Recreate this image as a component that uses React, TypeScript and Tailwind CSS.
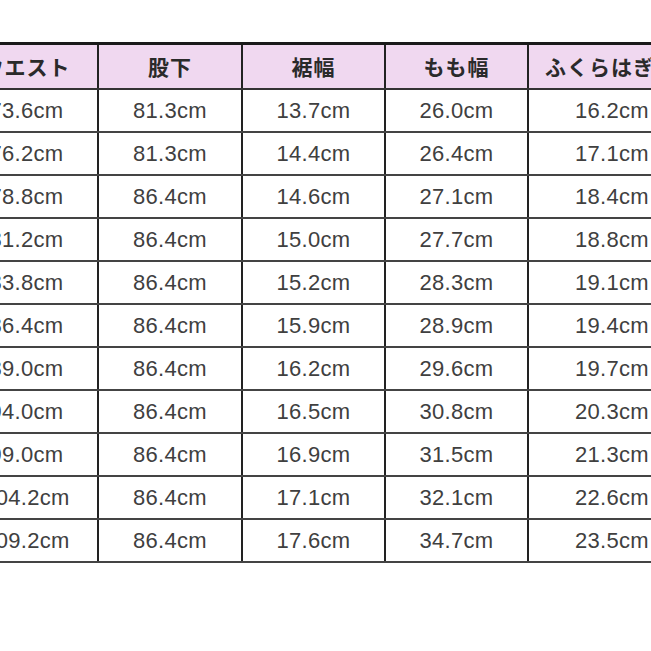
const headers = ["ウエスト", "股下", "裾幅", "もも幅", "ふくらはぎ"];

const widths = ["w-[143px]", "w-[144px]", "w-[143px]", "w-[143px]", "w-[170px]"];

const rows = [
  ["73.6", "81.3", "13.7", "26.0", "16.2"],
  ["76.2", "81.3", "14.4", "26.4", "17.1"],
  ["78.8", "86.4", "14.6", "27.1", "18.4"],
  ["81.2", "86.4", "15.0", "27.7", "18.8"],
  ["83.8", "86.4", "15.2", "28.3", "19.1"],
  ["86.4", "86.4", "15.9", "28.9", "19.4"],
  ["89.0", "86.4", "16.2", "29.6", "19.7"],
  ["94.0", "86.4", "16.5", "30.8", "20.3"],
  ["99.0", "86.4", "16.9", "31.5", "21.3"],
  ["104.2", "86.4", "17.1", "32.1", "22.6"],
  ["109.2", "86.4", "17.6", "34.7", "23.5"],
];

export default function App() {
  return (
    <div className="h-[651px] w-[651px] overflow-hidden bg-white pt-[42px]">
      <table className="ml-[-46px] w-[743px] min-w-[743px] table-fixed border-collapse">
        <thead>
          <tr className="h-[45px] bg-[#f0d8f0]">
            {headers.map((h, i) => (
              <th
                key={h}
                className={`${widths[i]} border-x-2 border-t-[3px] border-b-2 border-x-[#222] border-t-[#1a1a1a] border-b-[#333] p-0 font-['Noto_Sans_CJK_JP',sans-serif] text-[21px] font-bold tracking-[1px] text-[#2a2a2a] ${
                  i === 4 ? "pl-[16px] text-left" : "text-center"
                }`}
              >
                {h}
              </th>
            ))}
          </tr>
        </thead>
        <tbody>
          {rows.map((row) => (
            <tr key={row[0]} className="h-[43px]">
              {row.map((v, i) => (
                <td
                  key={i}
                  className={`border-x-2 border-y-2 border-x-[#222] border-y-[#444] p-0 font-['Liberation_Sans',sans-serif] text-[22px] tracking-[0.3px] text-[#404040] ${
                    i === 4 ? "pr-[48px] text-right" : "text-center"
                  }`}
                >
                  {v}cm
                </td>
              ))}
            </tr>
          ))}
        </tbody>
      </table>
    </div>
  );
}
